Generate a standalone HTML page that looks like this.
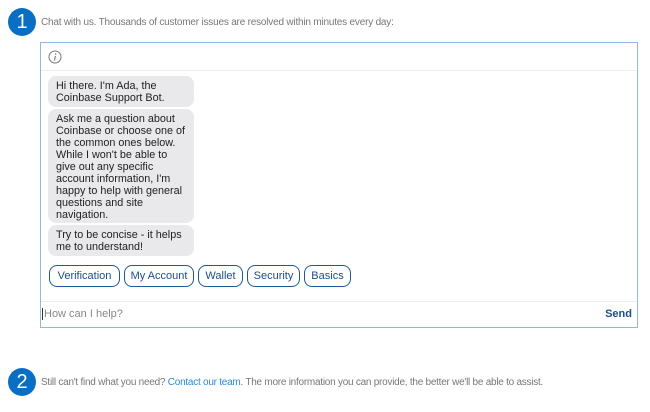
<!DOCTYPE html>
<html><head><style>
*{box-sizing:border-box;margin:0;padding:0}
body{width:650px;height:412px;background:#fff;font-family:"Liberation Sans",Arial,sans-serif;position:relative;overflow:hidden}
.num{position:absolute;width:28px;height:28px;border-radius:50%;background:#0a6fc2;color:#fff;font-size:20px;text-align:center;line-height:28px}
.step{position:absolute;left:41px;font-size:10px;color:#777;letter-spacing:-0.2px}
.box{position:absolute;left:40px;top:42px;width:598px;height:286px;border:1px solid #8fb9de}
.hdr{height:28px;border-bottom:1px solid #eee;position:relative}
.b{position:absolute;left:48px;width:146px;background:#e9e9eb;border-radius:8px;font-size:10.8px;line-height:12px;color:#222;padding:4px 8px 4px 8px}
.btn{position:absolute;top:265px;height:22px;border:1px solid #1c5a99;border-radius:8px;color:#1c4f88;font-size:11px;line-height:20px;text-align:center}
.inp{position:absolute;left:0;right:0;top:258px;height:1px;background:#eee}
</style></head><body>
<div class="num" style="left:8px;top:8px">1</div>
<div class="step" style="top:17px">Chat with us. Thousands of customer issues are resolved within minutes every day:</div>
<div class="box">
<div class="hdr"><svg width="14" height="14" style="position:absolute;left:7px;top:7px" viewBox="0 0 14 14"><circle cx="7" cy="7" r="6" fill="none" stroke="#777" stroke-width="1"/><circle cx="7.6" cy="4" r="0.8" fill="#777"/><path d="M7.4 6 L6.5 10.5" stroke="#777" stroke-width="1.1"/></svg></div>
<div class="inp"></div>
<div style="position:absolute;left:1px;top:265px;width:1px;height:12px;background:#333"></div>
<div style="position:absolute;left:3px;top:265px;font-size:11px;color:#888">How can I help?</div>
<div style="position:absolute;right:5px;top:265px;font-size:11px;color:#1c4f88;font-weight:bold">Send</div>
</div>
<div class="b" style="top:76px;height:31px">Hi there. I'm Ada, the Coinbase Support Bot.</div>
<div class="b" style="top:109px;height:114px">Ask me a question about Coinbase or choose one of the common ones below. While I won't be able to give out any specific account information, I'm happy to help with general questions and site navigation.</div>
<div class="b" style="top:225px;height:31px">Try to be concise - it helps me to understand!</div>
<div class="btn" style="left:49px;width:71px">Verification</div>
<div class="btn" style="left:124px;width:70px">My Account</div>
<div class="btn" style="left:198px;width:45px">Wallet</div>
<div class="btn" style="left:247px;width:53px">Security</div>
<div class="btn" style="left:304px;width:47px">Basics</div>
<div class="num" style="left:8px;top:368px">2</div>
<div class="step" style="top:377px;font-size:10px;letter-spacing:-0.25px">Still can't find what you need? <span style="color:#2a8ad4">Contact our team</span>. The more information you can provide, the better we'll be able to assist.</div>
</body></html>
